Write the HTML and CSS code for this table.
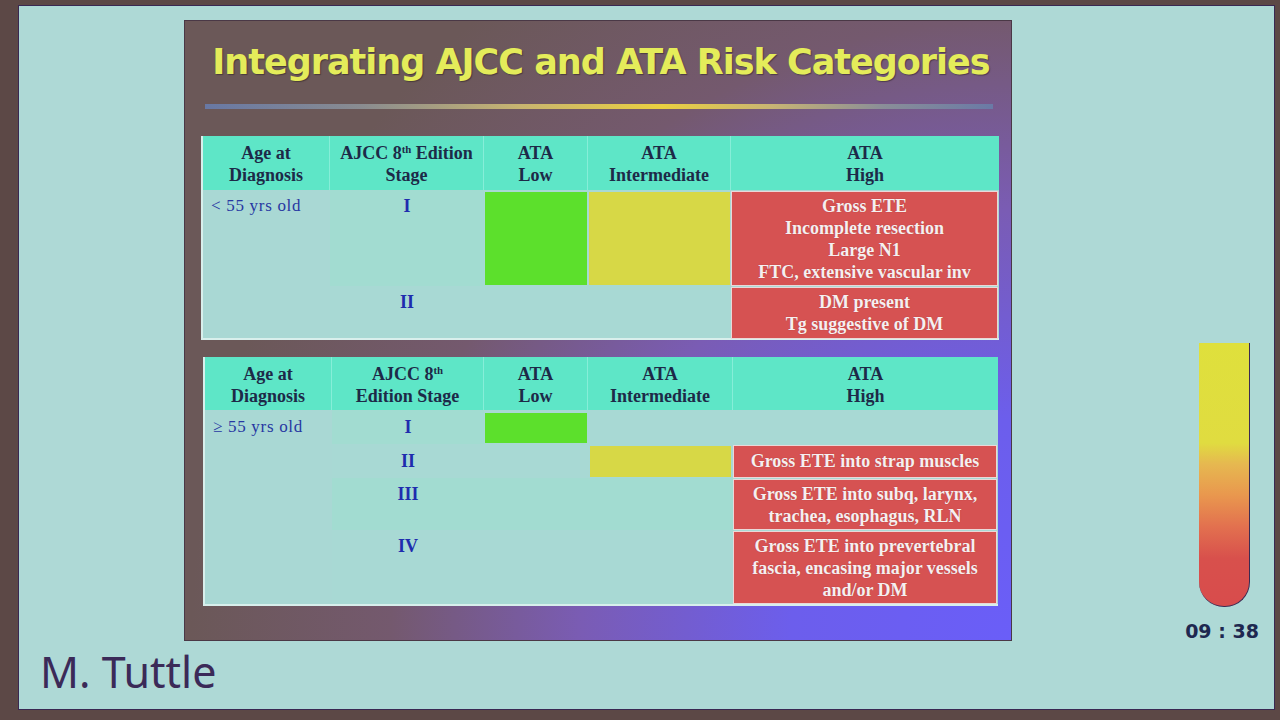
FILE: index.html
```html
<!DOCTYPE html>
<html lang="en">
<head>
<meta charset="utf-8">
<title>Integrating AJCC and ATA Risk Categories</title>
<link rel="stylesheet" href="styles.css">
</head>
<body>
<div class="screen">
  <div class="stage">
    <section class="slide">
      <h1 class="title">Integrating AJCC and ATA Risk Categories</h1>
      <div class="rule"></div>

      <div class="tbl t1">
        <div class="h">Age at<br>Diagnosis</div>
        <div class="h">AJCC 8<sup>th</sup> Edition<br>Stage</div>
        <div class="h">ATA<br>Low</div>
        <div class="h">ATA<br>Intermediate</div>
        <div class="h last">ATA<br>High</div>

        <div class="age t1-age">&lt; 55 yrs old</div>
        <div class="stg alt">I</div>
        <div class="g t1-g"></div>
        <div class="y t1-y"></div>
        <div class="r t1-r1">Gross ETE<br>Incomplete resection<br>Large N1<br>FTC, extensive vascular inv</div>

        <div class="stg">II</div>
        <div class="e span2"></div>
        <div class="r t1-r2">DM present<br>Tg suggestive of DM</div>
      </div>

      <div class="tbl t2">
        <div class="h">Age at<br>Diagnosis</div>
        <div class="h">AJCC 8<sup>th</sup><br>Edition Stage</div>
        <div class="h">ATA<br>Low</div>
        <div class="h">ATA<br>Intermediate</div>
        <div class="h last">ATA<br>High</div>

        <div class="age t2-age">&ge; 55 yrs old</div>
        <div class="stg alt mid">I</div>
        <div class="g t2-g"></div>
        <div class="e span2"></div>

        <div class="stg mid">II</div>
        <div class="e"></div>
        <div class="y t2-y"></div>
        <div class="r t2-r mid">Gross ETE into strap muscles</div>

        <div class="stg alt">III</div>
        <div class="e alt span2"></div>
        <div class="r t2-r">Gross ETE into subq, larynx,<br>trachea, esophagus, RLN</div>

        <div class="stg">IV</div>
        <div class="e span2"></div>
        <div class="r t2-r">Gross ETE into prevertebral<br>fascia, encasing major vessels<br>and/or DM</div>
      </div>
    </section>

    <aside class="timer">
      <div class="tube"></div>
      <div class="clock">09 : 38</div>
    </aside>
  </div>
  <div class="author">M. Tuttle</div>
</div>
</body>
</html>
```
FILE: styles.css
```css
* { box-sizing: border-box; }

html, body {
  margin: 0;
  padding: 0;
}

body {
  width: 1280px;
  height: 720px;
  background: #5c4846;
  padding: 5px 5px 10px 18px;
  overflow: hidden;
}

.screen {
  width: 1257px;
  height: 705px;
  background: #aed9d6;
  border: 1px solid #3a2852;
  padding: 14px 0 0 165px;
  display: flex;
  flex-direction: column;
}

.stage {
  display: flex;
  align-items: flex-end;
}

.slide {
  width: 828px;
  height: 621px;
  flex: none;
  border: 1px solid #4a3846;
  background: radial-gradient(circle at 100% 100%, #6a5ef8 0, #6c5eec 220px, #7a5cb4 430px, #74596e 620px, #6b5858 820px);
  padding: 21px 0 0 0;
  display: flex;
  flex-direction: column;
}

.title {
  margin: 0;
  padding-left: 6px;
  font-family: "Comic Sans MS", "DejaVu Sans", sans-serif;
  font-weight: bold;
  font-size: 35px;
  letter-spacing: -1px;
  line-height: 40px;
  color: #e4ec5a;
  text-align: center;
  text-shadow: 1px 1px 1px rgba(40, 30, 30, 0.5);
}

.rule {
  margin: 22px 0 0 20px;
  width: 788px;
  height: 5px;
  background: linear-gradient(to right, #6878a4 0%, #8a8c90 20%, #c8b470 40%, #ead040 58%, #c8b474 72%, #8a8e98 86%, #6a7aa6 100%);
}

.tbl {
  display: grid;
  background: #a8d9d4;
  border-left: 2px solid #d8efec;
  border-bottom: 2px solid #d8efec;
  font-family: "Liberation Serif", "Times New Roman", serif;
  font-size: 18px;
  line-height: 22px;
  text-align: center;
}

.t1 {
  margin: 27px 0 0 16px;
  width: 798px;
  grid-template-columns: 127px 154px 104px 143px 268px;
  grid-template-rows: 54px 96px 52px;
}

.t2 {
  margin: 17px 0 0 18px;
  width: 795px;
  grid-template-columns: 127px 152px 104px 145px 265px;
  grid-template-rows: 53px 34px 34px 52px 74px;
}

.h {
  background: #5ee6c7;
  color: #1d2a48;
  font-weight: bold;
  padding-top: 6px;
  border-right: 1px solid #86eed8;
}
.h.last { border-right: none; }

sup {
  font-size: 0.6em;
  line-height: 0;
  vertical-align: 0.6em;
}

.age {
  text-align: left;
  padding: 5px 0 0 8px;
  font-weight: normal;
  font-size: 17px;
  letter-spacing: 0.7px;
  color: #2737a2;
  background: #a9d8d4;
}
.t1-age { grid-row: 2 / span 2; }
.t2-age { grid-row: 2 / span 4; padding-top: 6px; }

.stg {
  padding-top: 5px;
  font-weight: bold;
  color: #1e2cae;
}
.stg.mid { padding-top: 6px; }

.alt { background: #a2dcd1; }

.span2 { grid-column: span 2; }

.g { background: #5ce02c; }
.y { background: #d7d846; }

.t1-g, .t1-y { margin: 2px 1px 1px 1px; }
.t2-g { margin: 3px 1px 1px 1px; }
.t2-y { margin: 2px 2px 1px 2px; }

.r {
  background: #d65252;
  color: #f6eff0;
  font-weight: bold;
  padding-top: 3px;
  box-shadow: 0 0 0 1px #ead8d8;
  text-shadow: 0 0 1px rgba(90, 20, 20, 0.4);
}
.t1-r1 { margin: 2px 2px 1px 1px; }
.t1-r2 { margin: 2px 2px 0 1px; }
.t2-r { margin: 2px 2px 1px 1px; }
.t2-r.mid { padding-top: 4px; }

.timer {
  width: 80px;
  margin: 0 0 -1px 170px;
  display: flex;
  flex-direction: column;
  align-items: flex-start;
}

.tube {
  margin-left: 17px;
  width: 51px;
  height: 264px;
  border-right: 1px solid #3c2a52;
  border-bottom: 1px solid #3c2a52;
  border-radius: 0 0 25px 25px;
  background: linear-gradient(to bottom, #dfe03c 0%, #e0dc40 38%, #e6b850 46%, #e9974e 58%, #e2704f 70%, #d8504c 82%, #d84c4c 100%);
}

.clock {
  align-self: center;
  margin-top: 13px;
  font-family: "DejaVu Sans", sans-serif;
  font-weight: bold;
  font-size: 19px;
  line-height: 22px;
  color: #1e2850;
  white-space: nowrap;
}

.author {
  margin: 6px 0 0 -144px;
  font-family: "Noto Sans", sans-serif;
  font-size: 43px;
  line-height: 50px;
  color: #3b2a58;
}
```
